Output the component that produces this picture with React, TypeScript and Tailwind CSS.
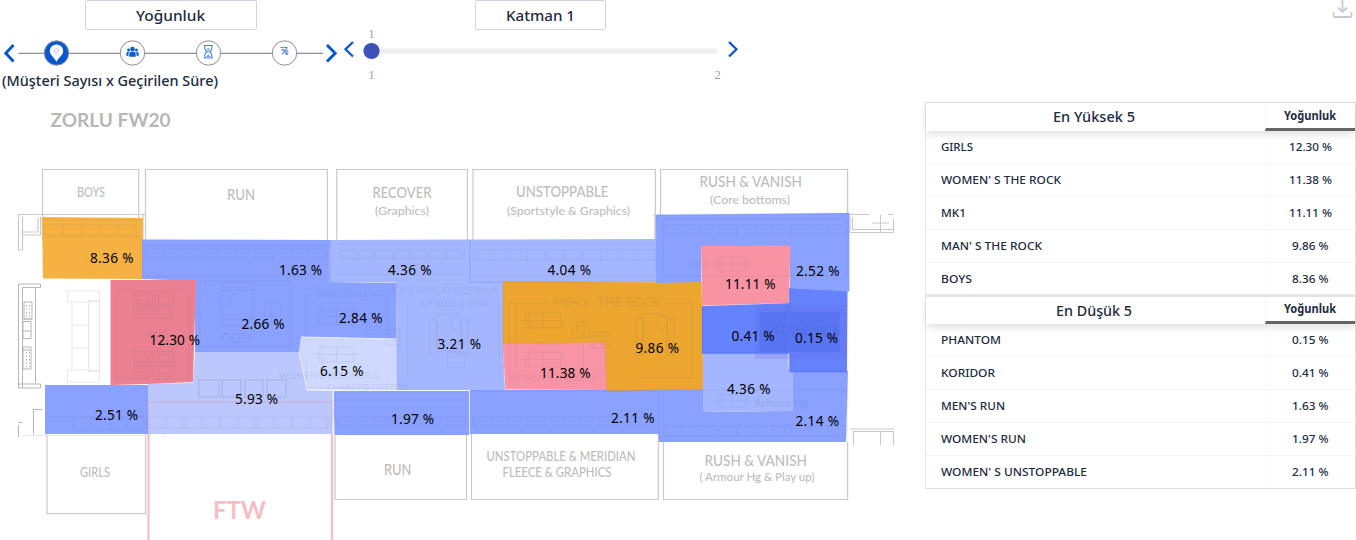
import React from "react";

type Row = [string, string];

const highest: Row[] = [
  ["GIRLS", "12.30 %"],
  ["WOMEN' S THE ROCK", "11.38 %"],
  ["MK1", "11.11 %"],
  ["MAN' S THE ROCK", "9.86 %"],
  ["BOYS", "8.36 %"],
];
const lowest: Row[] = [
  ["PHANTOM", "0.15 %"],
  ["KORIDOR", "0.41 %"],
  ["MEN'S RUN", "1.63 %"],
  ["WOMEN'S RUN", "1.97 %"],
  ["WOMEN' S UNSTOPPABLE", "2.11 %"],
];
const rowWidths: Record<string, number> = {
  GIRLS: 32, "WOMEN' S THE ROCK": 120, MK1: 25, "MAN' S THE ROCK": 101, BOYS: 31,
  PHANTOM: 60, KORIDOR: 54, "MEN'S RUN": 64, "WOMEN'S RUN": 85, "WOMEN' S UNSTOPPABLE": 146,
};

// Text set to an exact advance width.
function Fit({ text, width, size, weight = 400, height = 20 }: { text: string; width: number; size: number; weight?: number; height?: number }) {
  return (
    <svg width={width} height={height} className="block shrink-0 overflow-visible">
      <text x="0" y={height / 2 + size * 0.36} fontSize={size} fontWeight={weight} textLength={width} lengthAdjust="spacingAndGlyphs" fill="#212b41">{text}</text>
    </svg>
  );
}

const BLUE = "#8aa1ff";
const SOFT = "#a4b6ff";
const DEEP = "#6583ff";

const zones: [string, string][] = [
  ["42,217 143,218 142,279 43,278.5", "#f6b143"],
  ["142,239.5 330,240 329,282 196,281 142,279", BLUE],
  ["195,280 301,281 301,338 299,352 195,352", BLUE],
  ["301,281 329,282 396,283 396,339 301,337", BLUE],
  ["195,352 299,352 307,390 333,391 332,434 148,434 148,384 193,383", "#bbc7fd"],
  ["301,337 396,339 396.5,390 307,389.5 299,352", "#cfd9ff"],
  ["110.5,280 196,280 193,382 148,384 110.5,385", "#ea8091"],
  ["45,385 148,385 148,434 45,434", BLUE],
  ["330,240 470,239.5 470,283 329,282", SOFT],
  ["470,239.5 657,239 657,282 470,283", SOFT],
  ["396,282 504,282 503,343 505,390 396.5,390", SOFT],
  ["334,391 469,391 469,435 334,435", BLUE],
  ["470,390 659,390 659,434 470,434", BLUE],
  ["503.5,281.5 657,282.5 701.5,281.5 703.5,389 607,391 605,342 503,343.5", "#eca52f"],
  ["502.5,343.5 605,342 607,390 505.5,389.5", "#f993a6"],
  ["656,215 849,213 849,291 790,288 790,246 701,246 701,282 657,283", BLUE],
  ["703.5,389 703,412 793,411 792,371 848,371 846,442 659,442 659,390", BLUE],
  ["703,353 788,352 789,371 793,371 793,411 703,412", SOFT],
  ["701,246 790.5,245.5 789,303 702,305.5", "#f893a4"],
  ["702,306 790,303 790,353 702.5,353", DEEP],
  ["789.5,288 847.5,291 847,372 790,371.5", DEEP],
];

const values: [string, number, number, number][] = [
  ["8.36 %", 90, 263, 43.5], ["12.30 %", 149.5, 345, 50.5], ["1.63 %", 279, 275, 43], ["2.66 %", 241.5, 329, 43],
  ["2.84 %", 339, 323, 43.5], ["6.15 %", 320, 376, 43.5], ["5.93 %", 235, 404, 43], ["2.51 %", 95, 420, 43],
  ["4.36 %", 388, 275, 43.5], ["4.04 %", 547.5, 275, 43.5], ["3.21 %", 437.5, 349, 43.5], ["9.86 %", 635.5, 353, 43.5],
  ["11.38 %", 540, 378, 50.5], ["1.97 %", 391, 424, 43], ["2.11 %", 611, 423, 43.5], ["11.11 %", 725, 289, 50.5],
  ["2.52 %", 796, 276, 43.5], ["0.41 %", 731.5, 341, 43], ["0.15 %", 795, 343, 43], ["4.36 %", 727, 394, 43.5],
  ["2.14 %", 795.5, 426, 43.5],
];

const labels: [string, number, number, number, number][] = [
  ["BOYS", 77, 197, 28, 12.5], ["RUN", 227, 199.5, 28, 14.5], ["RECOVER", 372.5, 198, 59, 14.5], ["(Graphics)", 375, 215, 54, 12],
  ["UNSTOPPABLE", 516, 197, 92.5, 14.5], ["(Sportstyle & Graphics)", 507, 214.5, 123, 12],
  ["RUSH & VANISH", 699.5, 186.5, 102.5, 14.5], ["(Core bottoms)", 710, 204, 80, 12],
  ["GIRLS", 80, 476.5, 30, 12.5], ["RUN", 384, 475, 27.5, 14.5],
  ["UNSTOPPABLE & MERIDIAN", 486.5, 461, 149, 12.5], ["FLEECE & GRAPHICS", 502.5, 476.5, 109, 12.5],
  ["RUSH & VANISH", 704.5, 466, 102.5, 14.5], ["( Armour Hg & Play up)", 699.5, 481, 115, 12],
];

const ghosts: [string, number, number, number, number][] = [
  ["GOLF", 221, 343, 34, 14], ["BASKETBALL", 317, 297, 51, 9.5], ["MEN'S RIVAL FLEECE PLUS", 386, 294, 112, 10],
  ["A.F PLUS & MAX", 419, 307, 69, 10], ["MEN'S", 553, 306, 35, 12], ["THE ROCK", 597, 307, 64, 14],
  ["WOMEN'S THE ROCK", 508, 381, 90, 10], ["WOMEN'S RECOVER &", 279, 379, 100, 10], ["CHARGED COTTON", 327, 391, 81, 10],
  ["MK1", 689, 269, 20, 11], ["PHANTOM", 766, 337, 72, 16], ["Armour Hg", 754, 407, 54, 12], ["ACC", 146, 338, 20, 10],
];

function shelf(x: number, y: number, w: number, n: number, h = 10) {
  const step = w / n;
  let d = `M${x} ${y}h${w}v${h}h${-w}z`;
  for (let i = 1; i < n; i++) d += `M${x + i * step} ${y}v${h}`;
  return d;
}
const rack = (x: number, y: number, w = 35, h = 15) =>
  `M${x} ${y}h${w}v${h}h${-w}zM${x + w / 2} ${y}v${h}M${x - 4} ${y + h / 2}h${w + 8}M${x + 3} ${y - 2}v${h + 4}`;
const chair = (x: number, y: number) =>
  `M${x} ${y}h18v25h-18zM${x} ${y + 11}h18M${x} ${y + 14}h18M${x + 4} ${y + 3}h10v8h-10zM${x + 4} ${y + 15}h10v7h-10z`;
const stand = (x: number, y: number) =>
  `M${x} ${y}h24v36h-24zM${x - 7} ${y + 5}h7v36h-7zM${x + 24} ${y + 5}h7v36h-7zM${x + 14} ${y + 4}l5 -3l5 3v8l-5 3l-5 -3z`;

function FloorPlan() {
  return (
    <svg width="910" height="445" viewBox="0 95 910 445" className="block">
      <g fill="none" stroke="#c9c9c9" strokeWidth="1.2">
        <path d="M42.5 240V169.5H138.7V240M145.5 280V169.5H327.3V280M336.8 240V169.5H467.4V240M473 240V169.5H655.3V240M660.6 216V169.5H847.6V216" />
        <path d="M47 434V513.7H145.6V434M335 434V499.5H466.5V434M471.5 434V499.5H658.3V434M663.5 442V499.5H847.6V442" />
        <path d="M18.5 250V214.5H145M22.5 250V217M18.5 250h4M38 217v15H22.5M40.5 217v18H22.5M143 214v26M653 215h7M655 215v24" />
        <path d="M847 214.5h22M852.5 217v12.5h41.5M850 216v16.5h44M893.5 219v13M850 429h44M853.500 445V431.500H893.500V445" />
        <path d="M880.500 214.500v18M872 223h17M888 214.500h6M880.500 432v13" strokeWidth="1" />
      </g>
      <g fill="none" stroke="#b5b5b5" strokeWidth="1">
        <path d="M18.5 284V388H40.5V384H18.5M18.5 284H40.5V287.5H22.5V388M35.5 288V383M24 302h8v17h-8zM23 321.5h8v17h-8zM23 347h8v22h-8zM22 319h10M22 350h9M23 331h8M33.5 409.5h9M33.5 409v25M18.5 422.5h4M18.5 425v12" />
        <path d="M26.500 305v13M29.500 305v13M26.500 352v15M29.500 352v15" strokeDasharray="1.500 2" />
      </g>
      <path d="M67.5 291h32v11h-32zM72 302v68M88.5 300.5h11v71h-11zM72 325h16M72 348h16M67.5 370h32v12h-32zM22 435.5h126M165 240v-3M165 435v3" fill="none" stroke="#e7e7e7" />
      <path d="M148.5 434V540M332 434V540" fill="none" stroke="#f5bfc2" strokeWidth="2.2" />
      <g fontFamily="Lato, sans-serif" fill="#bdbdbd">
        {labels.map(([t, x, y, w, s], i) => <text key={i} x={x} y={y} fontSize={s} textLength={w} lengthAdjust="spacingAndGlyphs" fontWeight="500">{t}</text>)}
        <text x="50.500" y="126.500" fontSize="19.500" fontWeight="700" fill="#b7b7b7" textLength="120" lengthAdjust="spacingAndGlyphs">ZORLU FW20</text>
        <text x="213" y="519" fontSize="25" fontWeight="700" fill="#f5bfc2" textLength="53" lengthAdjust="spacingAndGlyphs">FTW</text>
      </g>
      {zones.map(([p, c], i) => <polygon key={i} points={p} fill={c} />)}
      <path d="M755 305h92v54h-92z" fill="#6968dc" opacity=".25" />
      <path d="M759.5 312h80v40h-80z" fill="#4668ed" opacity=".4" />
      <g fill="none" stroke="#4d5682" strokeWidth="1" opacity=".09">
        <path d={shelf(45, 225, 91, 5) + shelf(146, 249, 181, 10) + shelf(340, 251, 124, 7, 8) + shelf(473, 250, 182, 10) + shelf(664, 225, 182, 10)} />
        <path d={shelf(73, 417, 73, 4, 12) + shelf(148, 417, 180, 10, 11) + shelf(337, 417, 128, 7) + shelf(473, 417, 180, 10) + shelf(664, 426, 182, 10)} />
        <path d="M43 237h99M145 276h182M336 275h131M473 276h182M663 276h184V218H663zM663 390h184v45H663zM335 400h131M45 417h101M142 220h-99M145 246h181M340 244h125M473 244h182M664 220h182" />
        <path d={chair(134, 293) + chair(155, 293) + chair(134, 351) + chair(155, 351)} />
        <path d="M116 291h73v88h-73zM200 281h91v65h-91zM221 287h32v32h-32zM216 294l5-3h10l3 3l-5 10h-8zM222 287v-4h33v7h-33M222 322v4h33v-7M264 301h17v15h-17zM272 301v15M306 337V295h7M371 295h16v42M306 360v28h83M665 303h27v75h-54M509 372V303h41M499 303v73M407 303v73M516 303v70M583 342v25" />
        <path d={rack(319, 309) + rack(319, 347) + rack(526, 313) + rack(526, 352) + rack(718, 257, 28, 14) + rack(718, 395, 28, 12)} />
        <path d={stand(437, 315) + stand(643, 314)} />
        <path d="M367 319h14v15h-14zM386 330h14v15h-14zM370 323l7-3v10l-7-2zM389 334l7-3v10l-7-2zM573 322h16v16h-16zM592 332h16v16h-16zM577 326l7-3v12l-7-3zM596 336l7-3v12l-7-3zM447 353h18v14h-18z" />
        <path d="M199 380h20v17h-20zM222 380h19v17h-19zM245 380h18v17h-18zM267 380h19v17h-19z" strokeWidth="2" />
      </g>
      <path d="M148 402H332V434M148 434V402" fill="none" stroke="#dd829d" strokeWidth="2" opacity=".22" />
      <g fontFamily="Lato, sans-serif" fill="#46517c" opacity=".1">
        {ghosts.map(([t, x, y, w, s], i) => <text key={i} x={x} y={y} fontSize={s} fontWeight={t === "PHANTOM" || t === "Armour Hg" ? 700 : 400} textLength={w} lengthAdjust="spacingAndGlyphs">{t}</text>)}
      </g>
      <path d="M702.5 306V353H788V304M790 288V371.5H847" fill="none" stroke="#5a78f6" strokeWidth="1.3" />
      <path d="M503.5 343V282H657M503 343.5L605 342L607 390.5L703 389" fill="none" stroke="#e99525" strokeWidth="1.2" opacity=".75" />
      <path d="M656.5 215V283M657 215L849 213.5V291L790 288M330 240V282M470 240V282L503 282M659 390V442M470 391H659" fill="none" stroke="#7692ff" strokeWidth="1.4" opacity=".4" />
      <path d="M301 337L396 339M299 352L307 390L333 390.5L334 435M469.5 391V434" fill="none" stroke="#e8edff" strokeWidth="1" />
      <g fontFamily="'Noto Sans', sans-serif" fontSize="13.6" fill="#000">
        {values.map(([t, x, y, w], i) => <text key={i} x={x} y={y} textLength={w}>{t}</text>)}
      </g>
    </svg>
  );
}

function ModeSteps() {
  return (
    <svg width="340" height="32" viewBox="0 37 340 32" className="block">
      <path d="M18.5 53.3H323" stroke="#8e9094" strokeWidth="1.3" />
      <path d="M13.500 45L5.800 53.200L13.500 61.500M327 45L335.200 53.200L327 61.500" fill="none" stroke="#0757d5" strokeWidth="2.900" />
      {[56.5, 132.5, 208.5, 284.5].map((x, i) => <circle key={x} cx={x} cy="53" r="12.2" fill={i === 0 ? "#0757d5" : "#fff"} stroke="#8e9094" />)}
      <path d="M56.500 62C55 58 49.800 55.500 49.800 50.800a6.700 6.400 0 0 1 13.400 0C63.200 55.500 58 58 56.500 62z" fill="#fff" />
      <circle cx="56.500" cy="50.700" r="2.200" fill="#fff" stroke="#a9c4ee" strokeWidth=".8" />
      <g fill="#0b5bd7">
        <circle cx="132.500" cy="49" r="2.300" /><circle cx="128.600" cy="50" r="1.500" /><circle cx="136.400" cy="50" r="1.500" />
        <path d="M129.300 56.700v-2.700q0-2.400 3.200-2.400t3.200 2.400v2.700zM126.300 55.800v-2.300q0-1.900 2.600-1.800q-.5 1-.4 4.100zM138.700 55.800v-2.300q0-1.900-2.600-1.800q.5 1 .4 4.100z" />
      </g>
      <g fill="none" stroke="#4a84e0" strokeWidth="1.100">
        <path d="M203.800 45.500h9M203.800 58h9M204.800 46v2.500q0 2 2.500 3.200q-2.500 1.200-2.500 3.300v3M211.800 46v2.500q0 2-2.500 3.200q2.500 1.200 2.500 3.300v3" />
        <path d="M206 48.500h4.500l-2.200 2.200zM205.800 57l2.500-2.800l2.500 2.800z" fill="#74a0e8" stroke="none" />
        <path d="M280.500 47.500h3M287.500 47.500l-5.500 7M282.500 49l5.500 5.700M281.500 50h3" />
        <path d="M284 47.500h3M286 51q2.500-1 2 1.500M285 53.500l2 1" strokeWidth="1" />
      </g>
    </svg>
  );
}

function RankTable({ title, titleWidth, rows, second }: { title: string; titleWidth: number; rows: Row[]; second?: boolean }) {
  return (
    <section className={second ? "border-t-3 border-[#e9e9e9]" : "border-t border-[#dedede]"}>
      <div className={`${second ? "h-[27px]" : "h-[28px]"} relative flex bg-white shadow-[0_3px_9px_rgba(0,0,0,0.13)]`}>
        <div className="flex flex-1 items-center justify-center pr-[3px]"><Fit text={title} width={titleWidth} size={14.2} weight={500} /></div>
        <div className={`flex w-[90px] items-start justify-center border-b-3 border-l border-b-[#656565] border-l-[#f5f5f5] pr-[2px] ${second ? "pt-[2px]" : "pt-[3px]"}`}><Fit text="Yoğunluk" width={52} size={11.8} weight={700} /></div>
      </div>
      {rows.map(([name, value], i) => (
        <div key={name} className={`flex ${i < rows.length - 1 ? "h-[33px] border-b border-[#f3f3f3]" : second ? "h-[32px]" : "h-[31px]"}`}>
          <div className="flex flex-1 items-center pl-[15px]"><Fit text={name} width={rowWidths[name]} size={11.2} weight={500} /></div>
          <div className="flex w-[90px] items-center justify-center border-l border-[#f8f8f8] pr-[1px]"><Fit text={value} width={value.length > 6 ? 43 : 36.5} size={11.2} weight={500} /></div>
        </div>
      ))}
    </section>
  );
}

export default function App() {
  return (
    <main className="flex h-[540px] w-[1356px] overflow-hidden bg-white font-['Noto_Sans',sans-serif] text-[#212b41]">
      <div className="w-[910px] shrink-0">
        <header className="flex h-[95px]">
          <div className="w-[340px]">
            <div className="ml-[85px] flex h-[30px] w-[172px] items-center justify-center rounded-[2px] border border-[#d1d4de] pt-[1px] pr-[1px]"><Fit text="Yoğunluk" width={69} size={14.6} weight={500} /></div>
            <div className="mt-[7px]"><ModeSteps /></div>
            <div className="mt-[2px] ml-[2px]"><Fit text="(Müşteri Sayısı x Geçirilen Süre)" width={216} size={13.6} weight={500} /></div>
          </div>
          <div className="w-[420px]">
            <div className="ml-[135px] flex h-[30px] w-[131px] items-center justify-center rounded-[2px] border border-[#d1d4de] pt-[1px]"><Fit text="Katman 1" width={69} size={14.6} weight={500} /></div>
            <svg width="420" height="60" viewBox="340 27 420 60" className="-mt-[3px] block">
              <path d="M353 42L345.500 49.300L353 56.500M729 42L736.500 49.300L729 56.500" fill="none" stroke="#0757d5" strokeWidth="2.300" />
              <path d="M371 51H715.500" stroke="#eee" strokeWidth="5" strokeLinecap="round" />
              <circle cx="371.500" cy="51" r="8.100" fill="#3f51b5" />
              <g fontFamily="'Liberation Serif', serif" fontSize="13" fill="#a5a5a5" textAnchor="middle">
                <text x="371.500" y="38">1</text><text x="371.500" y="79">1</text><text x="717.500" y="79">2</text>
              </g>
            </svg>
          </div>
        </header>
        <FloorPlan />
      </div>
      <aside className="flex flex-1 flex-col">
        <div className="flex h-[102px] justify-end pr-[3px]">
          <svg width="21" height="20" viewBox="0 0 21 20" fill="none" stroke="#c6cad2" strokeWidth="1.800"><path d="M10.500 0v12M6 7.500l4.500 4.500L15 7.500M1.500 12v3.500q0 1.500 1.500 1.500h15q1.500 0 1.500-1.500V12" /></svg>
        </div>
        <div className="ml-[15px] w-[431px] border-x border-b border-[#dedede] border-l-[#e9e9e9]">
          <RankTable title="En Yüksek 5" titleWidth={82} rows={highest} />
          <RankTable title="En Düşük 5" titleWidth={76} rows={lowest} second />
        </div>
      </aside>
    </main>
  );
}
